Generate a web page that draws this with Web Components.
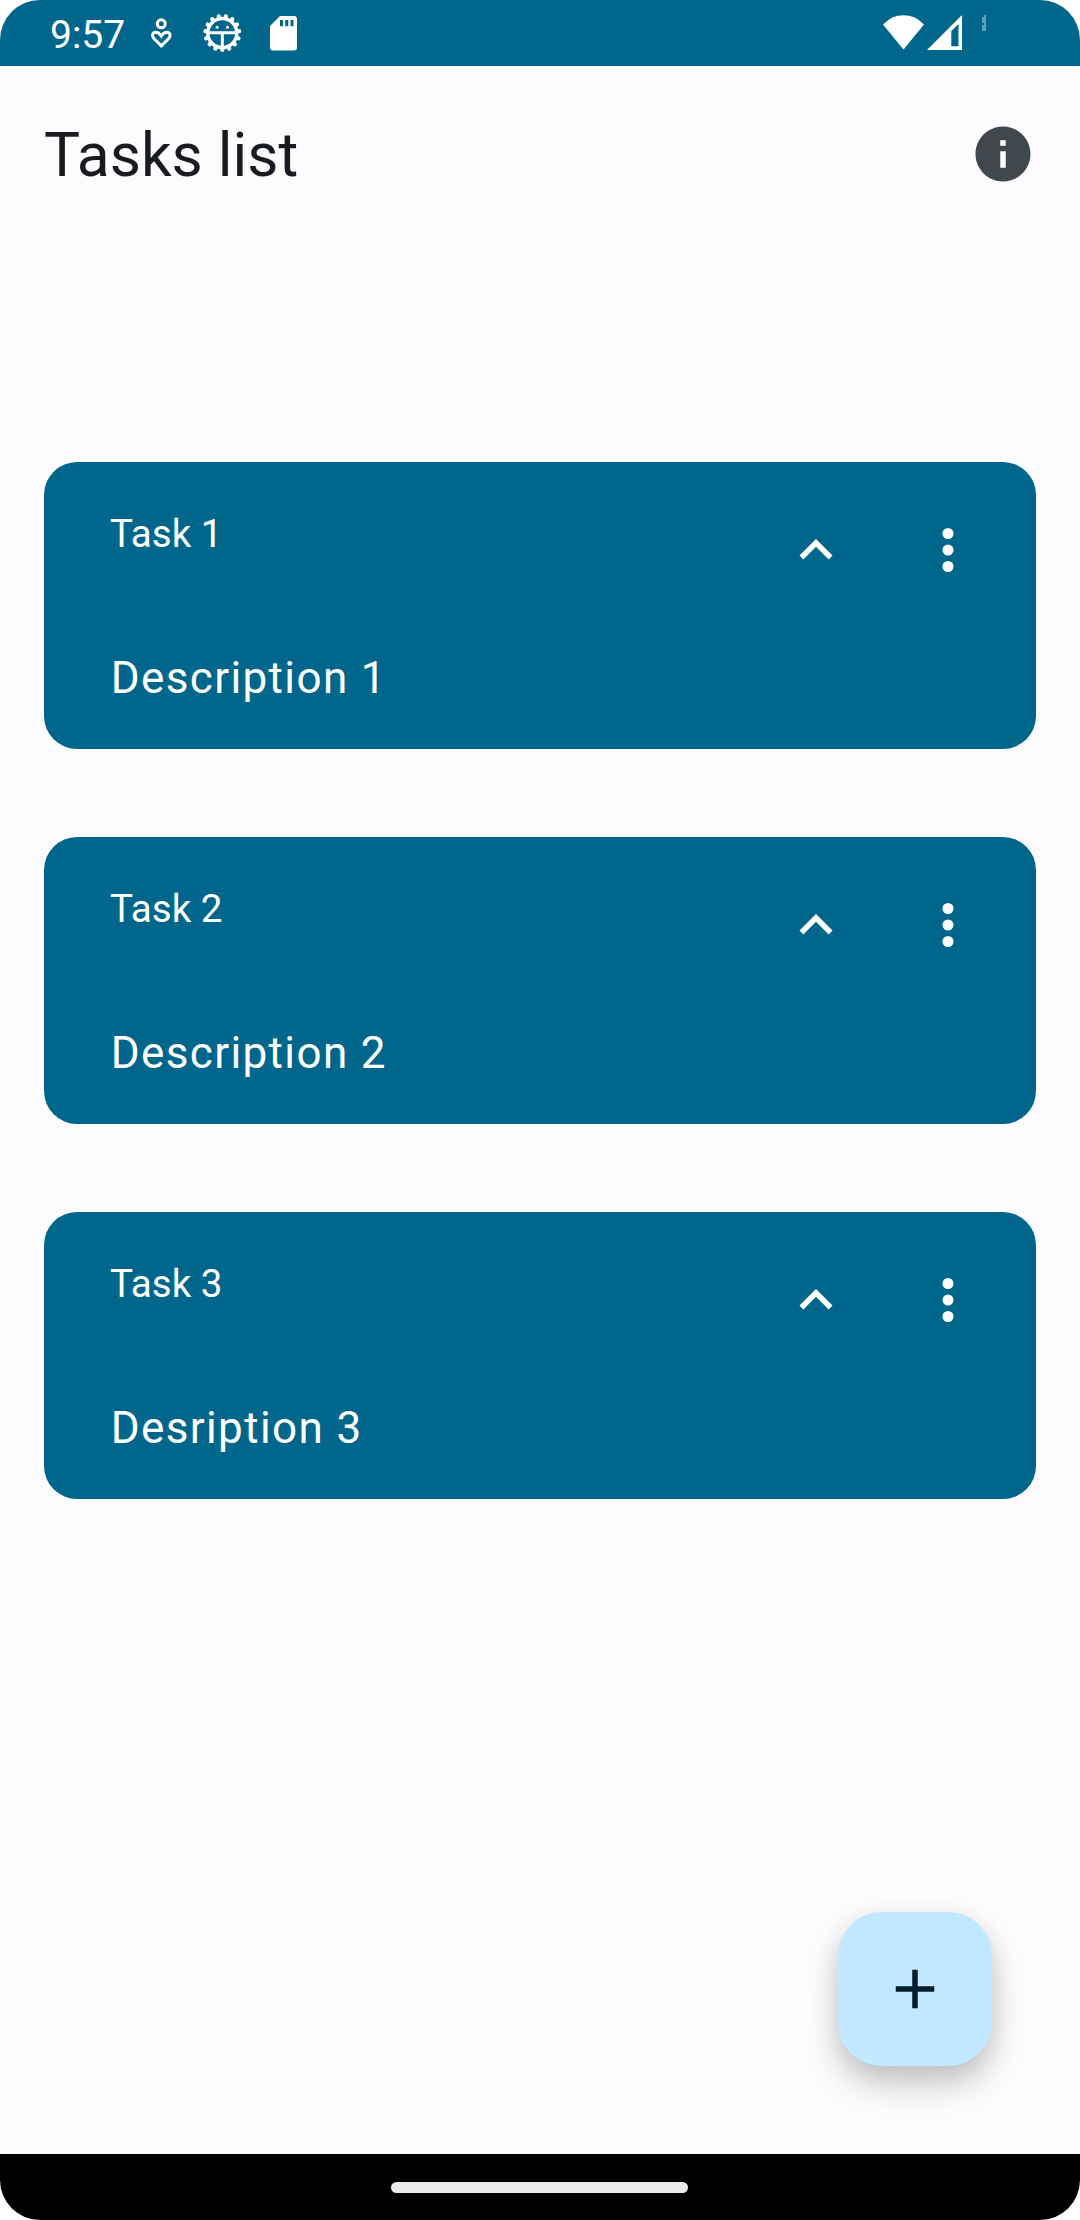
<!DOCTYPE html>
<html lang="en">
<head>
<meta charset="utf-8">
<title>Tasks list</title>
<style>
html,body{margin:0;background:#fff}
body{width:1080px;height:2220px;overflow:hidden;font-family:Roboto,sans-serif}
</style>
</head>
<body>
<task-app></task-app>
<script>
const define = (name, html) => customElements.define(name, class extends HTMLElement {
  constructor() {
    super();
    const t = document.createElement('template');
    t.innerHTML = html;
    this.attachShadow({ mode: 'open' }).appendChild(t.content.cloneNode(true));
  }
});

// Toothed badge: 15 rounded teeth around the ring.
const teeth = Array.from({ length: 15 }, (_, i) => {
  const a = (90 + i * 24) * Math.PI / 180;
  return `<line x1="${(20 + 15 * Math.cos(a)).toFixed(2)}" y1="${(20 + 15 * Math.sin(a)).toFixed(2)}" x2="${(20 + 17 * Math.cos(a)).toFixed(2)}" y2="${(20 + 17 * Math.sin(a)).toFixed(2)}"/>`;
}).join('');

define('status-bar', `
<style>
:host{display:flex;justify-content:space-between;height:66px;flex:none;background:#00668b;color:#fff}
.side{display:flex;align-items:flex-start}
.clock{font-size:39px;line-height:46px;margin:12px 0 0 50px;width:99px;white-space:nowrap}
svg{display:block;flex:none}
</style>
<div class="side">
  <span class="clock">9:57</span>
  <svg width="46" height="66" viewBox="149 0 46 66" fill="none" stroke="#fff" stroke-width="3"><circle cx="161.3" cy="23.8" r="4"/><path d="M161.3 45.900L153.900 38.500C151.500 36 152.300 32.300 155.700 32.200C158.600 32.200 160.200 34.300 161.300 36C162.400 34.300 164 32.200 166.900 32.200C170.300 32.300 171.100 36 168.700 38.500Z"/></svg>
  <svg width="60" height="66" viewBox="-7.3 -13 60 66"><g stroke="#fff" stroke-width="4.200" stroke-linecap="round">${teeth}</g><circle cx="20" cy="20" r="14.500" fill="#00668b" stroke="#fff" stroke-width="3.400"/><path d="M6 19.800H34M20 19.800V34" stroke="#fff" stroke-width="3"/><circle cx="14.800" cy="14.300" r="1.500" fill="#fff"/><circle cx="25.200" cy="14.300" r="1.500" fill="#fff"/></svg>
  <svg width="48" height="66" viewBox="255 0 48 66"><path fill="#fff" fill-rule="evenodd" d="M280 16H294Q297 16 297 19V47.4Q297 50.4 294 50.4H273Q270 50.4 270 47.4V26ZM280 20V26.3H283V20ZM285.300 20V26.300H288.300V20ZM290.500 20V26.300H293.500V20Z"/></svg>
</div>
<div class="side">
  <svg width="220" height="66" viewBox="860 0 220 66" fill="#fff"><path d="M903.500 49.500L883 24.500Q891.500 15.200 903.500 15.200Q915.500 15.200 924 24.500Z"/><path fill-rule="evenodd" d="M962 15V50H927ZM958.500 24L951.300 31V46.300H958.500Z"/><path fill-opacity=".38" d="M984 15H986V31H982V25H984V23H982V17H984Z"/></svg>
</div>`);

define('app-bar', `
<style>
:host{display:flex;justify-content:space-between;align-items:center;height:176px;flex:none;padding:0 44px;box-sizing:border-box;color:#191c1e}
h1{margin:0;padding-top:3px;font-weight:400;font-size:60.5px;line-height:77px}
svg{display:block}
</style>
<h1><slot></slot></h1>
<svg width="66" height="66" viewBox="0 0 24 24" fill="#41484d"><path d="M12 2C6.480 2 2 6.480 2 12s4.480 10 10 10 10-4.480 10-10S17.520 2 12 2zm1 15h-2v-6h2v6zm0-8h-2V7h2v2z"/></svg>`);

define('task-card', `
<style>
:host{display:flex;flex-direction:column;height:287px;box-sizing:border-box;padding:22px;border-radius:33px;background:#00668b;color:#fff}
.head{display:flex;align-items:flex-start;height:132px}
.title{flex:1;padding:22px 0 0 44px;font-size:38.5px;line-height:55px}
.icon{display:flex;width:132px;height:132px;align-items:center;justify-content:center}
.desc{padding:29px 0 0 44.700px;font-size:44px;line-height:66px;letter-spacing:1.375px}
svg{display:block;width:66px;height:66px;fill:#fff}
</style>
<div class="head">
  <div class="title"><slot name="title"></slot></div>
  <div class="icon"><svg viewBox="0 0 24 24"><path d="M12 8l-6 6 1.410 1.410L12 10.830l4.590 4.580L18 14z"/></svg></div>
  <div class="icon"><svg viewBox="0 0 24 24"><circle cx="12" cy="6" r="2"/><circle cx="12" cy="12" r="2"/><circle cx="12" cy="18" r="2"/></svg></div>
</div>
<div class="desc"><slot></slot></div>`);

define('add-button', `
<style>
:host{display:flex;align-items:center;justify-content:center;width:154px;height:154px;border-radius:44px;background:#c2e8ff;box-shadow:0 18px 32px rgba(0,0,0,.22),0 2px 24px rgba(0,0,0,.05)}
svg{display:block}
</style>
<svg width="66" height="66" viewBox="0 0 24 24" fill="#001e2c"><path d="M19 13h-6v6h-2v-6H5v-2h6V5h2v6h6v2z"/></svg>`);

define('nav-bar', `
<style>
:host{display:flex;justify-content:center;height:66px;flex:none;background:#000}
.pill{width:297px;height:11px;margin:27.500px 1px 0 0;border-radius:6px;background:#ebebeb}
</style>
<div class="pill"></div>`);

define('task-app', `
<style>
:host{display:flex;flex-direction:column;width:1080px;height:2220px;border-radius:40px;overflow:hidden;background:#fcfcff}
main{flex:1;display:flex;flex-direction:column;justify-content:space-between;padding:220px 44px 88px}
.list{display:flex;flex-direction:column;gap:88px}
add-button{align-self:flex-end;margin-right:44px}
</style>
<status-bar></status-bar>
<app-bar>Tasks list</app-bar>
<main>
  <div class="list">
    <task-card><span slot="title">Task 1</span>Description 1</task-card>
    <task-card><span slot="title">Task 2</span>Description 2</task-card>
    <task-card><span slot="title">Task 3</span>Desription 3</task-card>
  </div>
  <add-button></add-button>
</main>
<nav-bar></nav-bar>`);
</script>
</body>
</html>
